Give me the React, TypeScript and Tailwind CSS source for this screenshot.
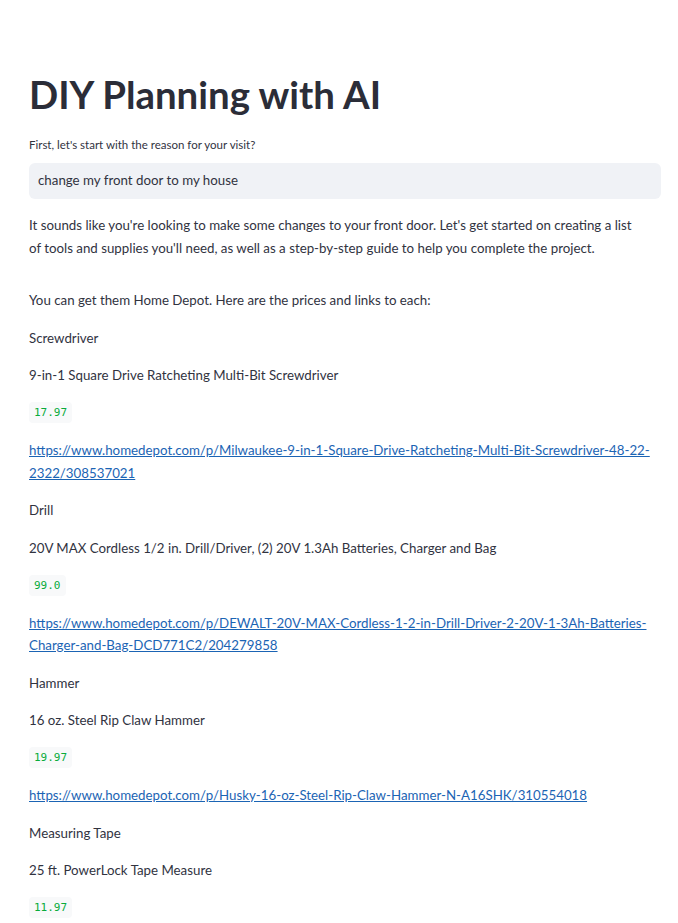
import React from 'react';

const items = [
  {
    name: 'Screwdriver',
    product: '9-in-1 Square Drive Ratcheting Multi-Bit Screwdriver',
    price: '17.97',
    link: 'https://www.homedepot.com/p/Milwaukee-9-in-1-Square-Drive-Ratcheting-Multi-Bit-Screwdriver-48-22-2322/308537021',
  },
  {
    name: 'Drill',
    product: '20V MAX Cordless 1/2 in. Drill/Driver, (2) 20V 1.3Ah Batteries, Charger and Bag',
    price: '99.0',
    link: 'https://www.homedepot.com/p/DEWALT-20V-MAX-Cordless-1-2-in-Drill-Driver-2-20V-1-3Ah-Batteries-Charger-and-Bag-DCD771C2/204279858',
  },
  {
    name: 'Hammer',
    product: '16 oz. Steel Rip Claw Hammer',
    price: '19.97',
    link: 'https://www.homedepot.com/p/Husky-16-oz-Steel-Rip-Claw-Hammer-N-A16SHK/310554018',
  },
  {
    name: 'Measuring Tape',
    product: '25 ft. PowerLock Tape Measure',
    price: '11.97',
    link: '',
  },
];

const P: React.FC<{ children: React.ReactNode }> = ({ children }) => (
  <p className="text-[13.3px] leading-[22.5px] mb-[15px] text-[#31333f]">{children}</p>
);

const App: React.FC = () => {
  return (
    <div
      className="min-h-screen bg-white pl-[29px] pr-[17px] pt-[67px] overflow-hidden"
      style={{ fontFamily: 'Lato, "Noto Sans", sans-serif' }}
    >
      <h1 className="text-[38.4px] leading-[54px] font-bold text-[#2b2d38] mb-[16px]">
        DIY Planning with AI
      </h1>

      <label className="block text-[11.5px] leading-[16px] text-[#31333f] mb-[10px]">
        First, let's start with the reason for your visit?
      </label>
      <div className="h-[36px] w-full bg-[#f0f2f6] rounded-[6px] flex items-center px-[9px] text-[13.3px] text-[#31333f] mb-[15px]">
        change my front door to my house
      </div>

      <p className="text-[13.3px] leading-[22.5px] mb-[30px] text-[#31333f] pr-[20px]">
        It sounds like you're looking to make some changes to your front door. Let's get started on creating a list of
        tools and supplies you'll need, as well as a step-by-step guide to help you complete the project.
      </p>

      <P>You can get them Home Depot. Here are the prices and links to each:</P>

      {items.map((it) => (
        <div key={it.name}>
          <P>{it.name}</P>
          <P>{it.product}</P>
          <div className="mb-[15px] h-[22.5px] flex items-center">
            <code
              className="bg-[#f8f9fa] rounded-[4px] px-[5px] py-[3px] text-[11px] leading-[15px] text-[#09ab3b]"
              style={{ fontFamily: '"DejaVu Sans Mono", monospace' }}
            >
              {it.price}
            </code>
          </div>
          {it.link && (
            <p className="text-[13.3px] leading-[22.5px] mb-[15px] break-words pr-[10px]">
              <a href={it.link} className="text-[#1b64b4] underline">
                {it.link}
              </a>
            </p>
          )}
        </div>
      ))}
    </div>
  );
};

export default App;
